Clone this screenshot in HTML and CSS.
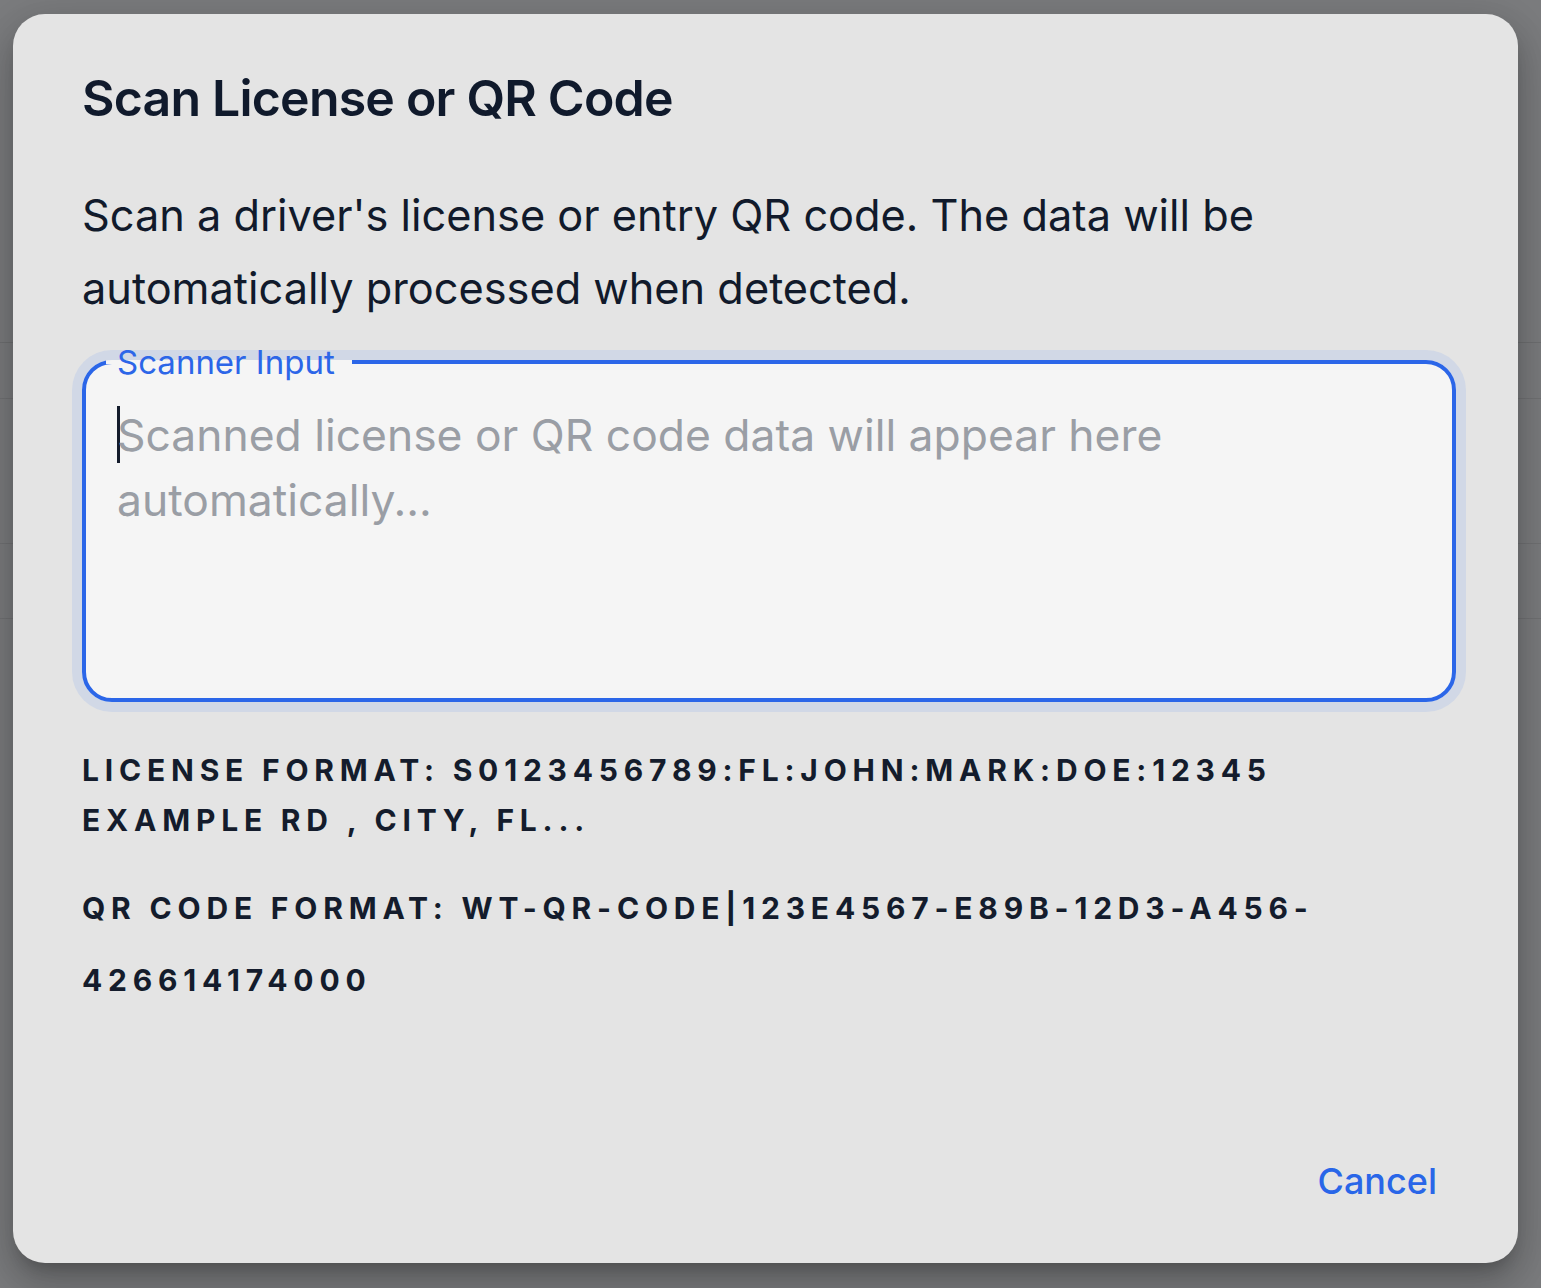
FILE: index.html
```html
<!DOCTYPE html>
<html lang="en">
<head>
<meta charset="utf-8">
<title>Scan License or QR Code</title>
<link rel="stylesheet" href="styles.css">
</head>
<body>
<div class="backdrop">
  <div class="dialog" role="dialog" aria-labelledby="dlg-title">
    <h2 class="dialog-title" id="dlg-title">Scan License or QR Code</h2>
    <div class="dialog-content">
      <p class="dialog-text">Scan a driver's license or entry QR code. The data will be automatically processed when detected.</p>
      <div class="field-ring">
        <fieldset class="field">
          <legend class="field-label">Scanner Input</legend>
          <div class="field-input"><span class="caret"></span><span class="placeholder">Scanned license or QR code data will appear here automatically...</span></div>
        </fieldset>
      </div>
      <p class="spec spec-license">License format: S0123456789:FL:JOHN:MARK:DOE:12345 EXAMPLE RD , CITY, FL...</p>
      <p class="spec spec-qr">QR Code format: WT-QR-CODE|123e4567-e89b-12d3-a456-426614174000</p>
    </div>
    <div class="dialog-actions">
      <button class="btn-text" type="button">Cancel</button>
    </div>
  </div>
</div>
</body>
</html>
```

FILE: styles.css
```css
* { box-sizing: border-box; }
html, body { margin: 0; padding: 0; }
body {
  width: 1541px;
  height: 1288px;
  overflow: hidden;
  background: #7b7c7e;
  font-family: Inter, "Noto Sans", sans-serif;
}
.backdrop {
  height: 1288px;
  padding: 14px 23px 25px 13px;
  background:
    linear-gradient(#6f7072, #6f7072) 0 342px / 100% 1px no-repeat,
    linear-gradient(#717274, #717274) 0 398px / 100% 1px no-repeat,
    linear-gradient(#717274, #717274) 0 543px / 100% 1px no-repeat,
    linear-gradient(#717274, #717274) 0 618px / 100% 1px no-repeat,
    #7b7c7e;
}
.dialog {
  height: 1249px;
  background: #e4e4e4;
  border-radius: 32px;
  box-shadow: 0 11px 15px -7px rgba(0,0,0,0.2), 0 24px 38px 3px rgba(0,0,0,0.14), 0 9px 46px 8px rgba(0,0,0,0.12);
  display: flex;
  flex-direction: column;
  padding: 0 62px 0 69px;
}
.dialog-title {
  margin: 0;
  padding-top: 52px;
  font-size: 50px;
  line-height: 64px;
  font-weight: 600;
  letter-spacing: -0.8px;
  color: #101a2c;
}
.dialog-content {
  flex: 1;
  padding-top: 49px;
}
.dialog-text {
  margin: 0;
  font-size: 43.3px;
  line-height: 73px;
  font-weight: 400;
  letter-spacing: 0;
  color: #111a2b;
  max-width: 1250px;
}
.field-ring {
  margin-top: 25px;
  border-radius: 40px;
  background: #d1d8e6;
  padding: 10px;
  margin-left: -10px;
  margin-right: -10px;
}
.field {
  margin: 0;
  height: 342px;
  border: 4px solid #2b66e8;
  border-radius: 30px;
  background: #f5f5f5;
  padding: 0 30px 0 31px;
  min-width: 0;
}
.field-label {
  margin-left: -11px;
  padding: 0 17px 0 11px;
  font-size: 33px;
  line-height: 4px;
  height: 4px;
  color: #2c66e8;
  letter-spacing: 0;
}
.field-input {
  padding-top: 39px;
  font-size: 44.4px;
  line-height: 65px;
  color: #9a9ea5;
  letter-spacing: 0;
}
.caret {
  display: inline-block;
  width: 3px;
  height: 57px;
  margin-right: -3px;
  background: #131b2b;
  vertical-align: -12px;
}
.spec {
  margin: 0;
  font-size: 30px;
  font-weight: 700;
  text-transform: uppercase;
  letter-spacing: 5.8px;
  color: #141c2c;
}
.spec-license {
  margin-top: 33px;
  line-height: 50px;
}
.spec-qr {
  margin-top: 27px;
  line-height: 72px;
}
.dialog-actions {
  display: flex;
  justify-content: flex-end;
  padding: 0 7px 50px 0;
}
.btn-text {
  border: 0;
  background: none;
  padding: 8px 12px;
  font-family: inherit;
  font-size: 36px;
  line-height: 48px;
  font-weight: 500;
  color: #2966e8;
  cursor: pointer;
}
```
